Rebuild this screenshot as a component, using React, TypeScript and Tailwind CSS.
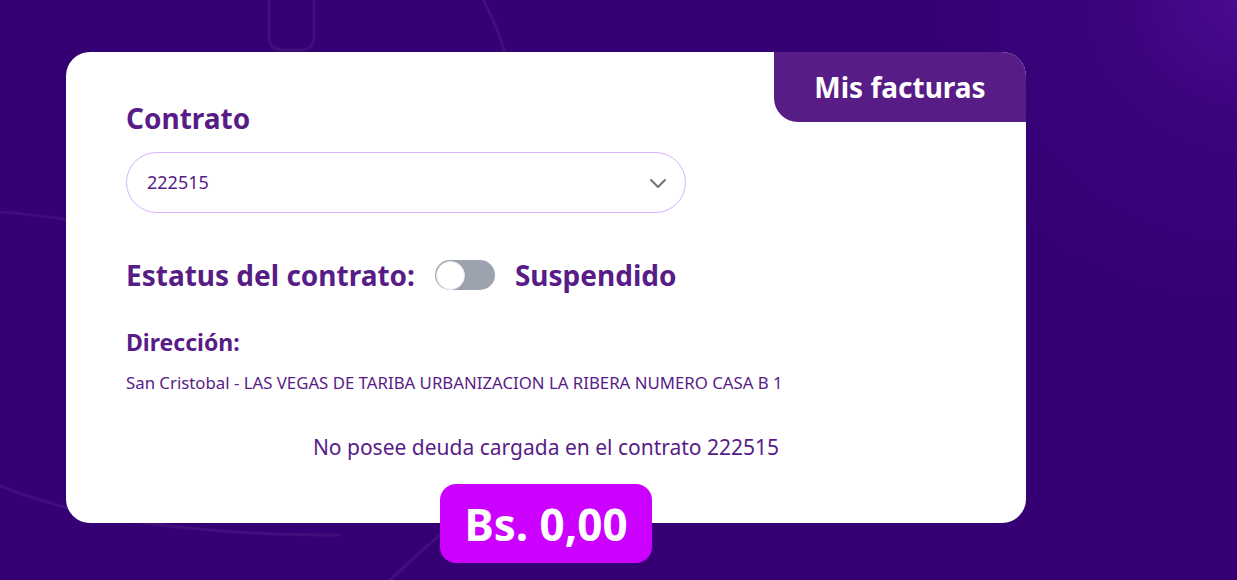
import React from "react";

export default function App() {
  return (
    <div
      className="relative h-[580px] w-full overflow-hidden bg-[#350074] bg-[radial-gradient(circle_at_100%_0%,#4b0a91_0px,#3b037d_120px,#350074_300px)] pl-[66px] pt-[52px]"
      style={{ fontFamily: '"Noto Sans", "Open Sans", sans-serif' }}
    >
      <svg className="pointer-events-none absolute inset-0" width="1237" height="580" fill="none">
        <path d="M269 -10 V36 Q269 50 283 50 H300 Q314 50 314 36 V-10" stroke="#ffffff" strokeOpacity="0.06" strokeWidth="3" />
        <path d="M478 -10 Q500 30 507 60" stroke="#ffffff" strokeOpacity="0.06" strokeWidth="3" />
        <path d="M0 486 Q120 535 340 535" stroke="#ffffff" strokeOpacity="0.06" strokeWidth="3" />
        <path d="M0 212 Q30 214 70 220" stroke="#ffffff" strokeOpacity="0.05" strokeWidth="3" />
        <path d="M380 590 Q405 565 440 535" stroke="#ffffff" strokeOpacity="0.06" strokeWidth="3" />
      </svg>
      <div className="relative h-[471px] w-[960px] rounded-[24px] bg-white text-[#581c87]">
        <div className="absolute right-0 top-0 flex h-[70px] w-[252px] items-center justify-center rounded-bl-[24px] rounded-tr-[24px] bg-[#581c87] text-[28px] font-bold text-white">
          Mis facturas
        </div>
        <div className="flex flex-col pl-[60px] pr-[60px] pt-[48px]">
          <div className="text-[28px] font-bold leading-[36px]">Contrato</div>
          <div className="mt-[16px] flex h-[61px] w-[560px] items-center justify-between rounded-full border border-[#d8b4fe] pl-[20px] pr-[15px]">
            <span className="text-[18px]">222515</span>
            <svg width="24" height="24" viewBox="0 0 24 24" fill="none" stroke="#6b7280" strokeWidth="2" strokeLinecap="round" strokeLinejoin="round">
              <path d="M5 9l7 7 7-7" />
            </svg>
          </div>
          <div className="mt-[44px] flex items-center gap-[20px] text-[28px] font-bold leading-[36px]">
            <span>Estatus del contrato:</span>
            <div className="flex h-[30px] w-[60px] items-center rounded-full bg-[#9ca3af] pl-[1px]">
              <div className="h-[29px] w-[29px] rounded-full border border-[#e5e7eb] bg-white" />
            </div>
            <span>Suspendido</span>
          </div>
          <div className="mt-[34px] text-[23px] font-bold leading-[30px]">Dirección:</div>
          <div className="mt-[14px] text-[16.8px] leading-[24px]">
            San Cristobal - LAS VEGAS DE TARIBA URBANIZACION LA RIBERA NUMERO CASA B 1
          </div>
          <div className="mt-[38px] text-center text-[21px] leading-[28px]">
            No posee deuda cargada en el contrato 222515
          </div>
        </div>
        <div className="absolute left-[374px] top-[432px] flex h-[79px] w-[212px] items-center justify-center rounded-[16px] bg-[#cc00ff] text-[44px] font-bold text-white">
          Bs. 0,00
        </div>
      </div>
    </div>
  );
}
